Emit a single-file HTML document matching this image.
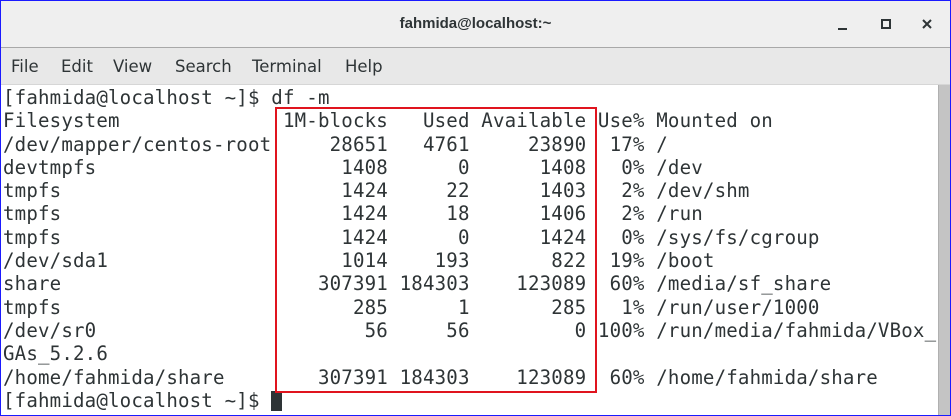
<!DOCTYPE html>
<html><head><style>
body{margin:0;width:951px;height:416px;overflow:hidden;background:#fff;}
.win{position:absolute;left:0;top:0;width:949px;height:414px;border:1px solid #1a1aff;overflow:hidden;}
.title{position:absolute;left:0;top:0;width:949px;height:46px;background:#efefef;border-bottom:1px solid #a8a8a8;font:bold 15px "Liberation Sans",sans-serif;color:#2e3436;text-align:center;line-height:46px;}
.menu{position:absolute;left:0;top:47px;width:949px;height:36px;background:#e8e8e8;border-bottom:1px solid #d6d6d6;font:16.5px "DejaVu Sans","Liberation Sans",sans-serif;color:#2e3436;}
.menu span{position:absolute;top:9px;}
pre{position:absolute;left:2px;top:85px;margin:0;font:19.1px/23.3px "DejaVu Sans Mono","Liberation Mono",monospace;letter-spacing:0.17px;color:#2e3436;}
.box{position:absolute;left:274px;top:106px;width:318px;height:282px;border:2px solid #e0141e;}
.sb{position:absolute;left:937px;top:84px;width:12px;height:330px;background:#c4c4c4;border-left:1px solid #b0b0b0;}
.cur{display:inline-block;width:11px;height:20px;background:#2e3436;vertical-align:-4px;}
</style></head><body><div class="win">
<div class="title">fahmida@localhost:~
<svg style="position:absolute;left:815px;top:17px" width="120" height="14"><rect x="22" y="10" width="9" height="2" fill="#2e3436"/><rect x="66" y="2" width="8" height="8" fill="none" stroke="#2e3436" stroke-width="2"/><path d="M107 2 L115 10 M115 2 L107 10" stroke="#2e3436" stroke-width="2"/></svg></div>
<div class="menu"><span style="left:10px">File</span><span style="left:60px">Edit</span><span style="left:112px">View</span><span style="left:174px">Search</span><span style="left:251px">Terminal</span><span style="left:344px">Help</span></div>
<pre>[fahmida@localhost ~]$ df -m
Filesystem              1M-blocks   Used Available Use% Mounted on
/dev/mapper/centos-root     28651   4761     23890  17% /
devtmpfs                     1408      0      1408   0% /dev
tmpfs                        1424     22      1403   2% /dev/shm
tmpfs                        1424     18      1406   2% /run
tmpfs                        1424      0      1424   0% /sys/fs/cgroup
/dev/sda1                    1014    193       822  19% /boot
share                      307391 184303    123089  60% /media/sf_share
tmpfs                         285      1       285   1% /run/user/1000
/dev/sr0                       56     56         0 100% /run/media/fahmida/VBox_
GAs_5.2.6
/home/fahmida/share        307391 184303    123089  60% /home/fahmida/share
[fahmida@localhost ~]$ <span class="cur"></span></pre>
<div class="box"></div>
<div class="sb"></div>
</div></body></html>
